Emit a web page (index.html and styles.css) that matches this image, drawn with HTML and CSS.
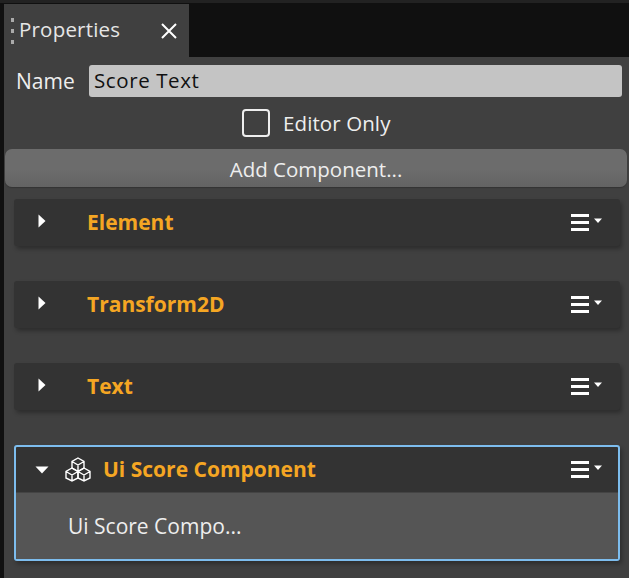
FILE: index.html
```html
<!DOCTYPE html>
<html lang="en">
<head>
    <meta charset="UTF-8">
    <meta name="viewport" content="width=device-width, initial-scale=1.0">
    <title>Properties</title>
    <link rel="stylesheet" href="styles.css">
</head>
<body>

<div class="tabBar">
    <div class="tab">
        <div class="grip"><span></span><span></span><span></span></div>
        <span class="tabTitle">Properties</span>
        <svg class="tabClose" width="16" height="16" viewBox="0 0 16 16"><path d="M1 1 L15 15 M15 1 L1 15" stroke="#fff" stroke-width="2" fill="none"/></svg>
    </div>
</div>

<div class="panel">
    <div class="nameRow">
        <label class="nameLabel">Name</label>
        <div class="nameInput">Score Text</div>
    </div>

    <div class="editorRow">
        <span class="checkbox"></span>
        <span class="editorLabel">Editor Only</span>
    </div>

    <div class="addButton">Add Component...</div>

    <!-- Collapsed components -->
    <div class="card">
        <div class="cardHeader">
            <svg class="arrow" width="8" height="14" viewBox="0 0 8 14"><path d="M0.5 0.5 L7.5 7 L0.5 13.5 Z" fill="#fff"/></svg>
            <span class="cardTitle">Element</span>
            <svg class="menuIcon" width="34" height="18" viewBox="0 0 34 18"><path d="M0 0 H18 V3 H0 Z M0 7 H18 V10 H0 Z M0 14 H18 V17 H0 Z M23 4.5 H31 L27 9 Z" fill="#fff"/></svg>
        </div>
    </div>
    <div class="card">
        <div class="cardHeader">
            <svg class="arrow" width="8" height="14" viewBox="0 0 8 14"><path d="M0.5 0.5 L7.5 7 L0.5 13.5 Z" fill="#fff"/></svg>
            <span class="cardTitle">Transform2D</span>
            <svg class="menuIcon" width="34" height="18" viewBox="0 0 34 18"><path d="M0 0 H18 V3 H0 Z M0 7 H18 V10 H0 Z M0 14 H18 V17 H0 Z M23 4.5 H31 L27 9 Z" fill="#fff"/></svg>
        </div>
    </div>
    <div class="card">
        <div class="cardHeader">
            <svg class="arrow" width="8" height="14" viewBox="0 0 8 14"><path d="M0.5 0.5 L7.5 7 L0.5 13.5 Z" fill="#fff"/></svg>
            <span class="cardTitle">Text</span>
            <svg class="menuIcon" width="34" height="18" viewBox="0 0 34 18"><path d="M0 0 H18 V3 H0 Z M0 7 H18 V10 H0 Z M0 14 H18 V17 H0 Z M23 4.5 H31 L27 9 Z" fill="#fff"/></svg>
        </div>
    </div>

    <!-- Selected component -->
    <div class="card selected">
        <div class="cardHeader openHeader">
            <svg class="arrowDown" width="14" height="8" viewBox="0 0 14 8"><path d="M0.5 0.5 L13.5 0.5 L7 7.5 Z" fill="#fff"/></svg>
            <svg class="cubes" width="26" height="25" viewBox="0 0 26 25" fill="none" stroke="#fff" stroke-width="1.4">
                <path d="M13 1 L19 4.5 V11 L13 14.5 L7 11 V4.5 Z M7 4.5 L13 8 L19 4.5 M13 8 V14.5"/>
                <path d="M7 11 L13 14.5 V21 L7 24 L1 21 V14.5 Z M1 14.5 L7 18 L13 14.5 M7 18 V24"/>
                <path d="M19 11 L25 14.5 V21 L19 24 L13 21 V14.5 Z M13 14.5 L19 18 L25 14.5 M19 18 V24"/>
            </svg>
            <span class="cardTitle">Ui Score Component</span>
            <svg class="menuIcon" width="34" height="18" viewBox="0 0 34 18"><path d="M0 0 H18 V3 H0 Z M0 7 H18 V10 H0 Z M0 14 H18 V17 H0 Z M23 4.5 H31 L27 9 Z" fill="#fff"/></svg>
        </div>
        <div class="cardBody">Ui Score Compo...</div>
    </div>
</div>

</body>
</html>
```

FILE: styles.css
```css
html, body {
    height: 100%;
}

body {
    margin: 0;
    padding: 4px 0 0 4px;
    box-sizing: border-box;
    overflow: hidden;
    font-family: 'Open Sans', 'Noto Sans', sans-serif;
    color: #eee;
    background-color: #101010;
    box-shadow: inset 0 3px 0 #222;
}

.tabBar {
    height: 53px;
    display: flex;
}

.tab {
    width: 185px;
    height: 53px;
    display: flex;
    align-items: center;
    background-color: #404040;
    box-sizing: border-box;
    padding-left: 7px;
}

.grip {
    width: 8px;
    height: 26px;
    display: flex;
    flex-direction: column;
    justify-content: space-between;
}

.grip span {
    display: block;
    width: 3px;
    height: 4px;
    background-color: #aaa;
}

.tabTitle {
    font-size: 20.5px;
    letter-spacing: 0.2px;
    width: 142px;
    margin-top: -3px;
    color: #e6e6e6;
}

.panel {
    height: 521px;
    background-color: #404040;
    box-sizing: border-box;
    padding: 8px 0 0 1px;
}

.nameRow {
    display: flex;
    align-items: center;
    height: 32px;
    padding-left: 11px;
}

.nameLabel {
    width: 73px;
    font-size: 21px;
}

.nameInput {
    width: 533px;
    height: 32px;
    line-height: 30px;
    box-sizing: border-box;
    padding-left: 5px;
    background-color: #c4c4c4;
    border-radius: 3px;
    color: #111;
    font-size: 20.5px;
    letter-spacing: 0.6px;
}

.editorRow {
    display: flex;
    align-items: center;
    height: 28px;
    margin-top: 12px;
    padding-left: 237px;
}

.checkbox {
    width: 28px;
    height: 28px;
    box-sizing: border-box;
    border: 2px solid #eee;
    border-radius: 4px;
}

.editorLabel {
    margin-left: 13px;
    font-size: 20.5px;
    letter-spacing: 0.1px;
}

.addButton {
    width: 622px;
    height: 38px;
    line-height: 40px;
    margin-top: 12px;
    text-align: center;
    font-size: 20.5px;
    border-radius: 7px;
    background: linear-gradient(#6c6c6c, #6c6c6c 55%, #636363);
    box-shadow: 0 1px 1px #333;
}

.card {
    width: 606px;
    margin: 12px 0 35px 9px;
    border-radius: 3px;
    background-color: #333;
    box-shadow: 2px 3px 4px rgba(0, 0, 0, 0.3);
}

.cardHeader {
    display: flex;
    align-items: center;
    height: 47px;
    padding: 0 15px 0 24px;
}

.arrow {
    margin-right: 41px;
    margin-bottom: 3px;
}

.arrowDown {
    margin: 0 16px 0 0;
}

.cubes {
    margin-right: 12px;
}

.cardTitle {
    flex: 1;
    margin-top: -2px;
    font-size: 21px;
    font-weight: 700;
    color: #f5a623;
}

.selected {
    margin-top: 0;
    box-sizing: border-box;
    height: 116px;
    border: 2px solid #7dbdee;
    overflow: hidden;
}

.openHeader {
    height: 45px;
    padding-left: 19px;
    padding-right: 13px;
}

.cardBody {
    height: 69px;
    box-sizing: border-box;
    padding: 19px 0 0 52px;
    font-size: 21px;
    background-color: #555;
    border-top: 1px solid #444;
}
```
